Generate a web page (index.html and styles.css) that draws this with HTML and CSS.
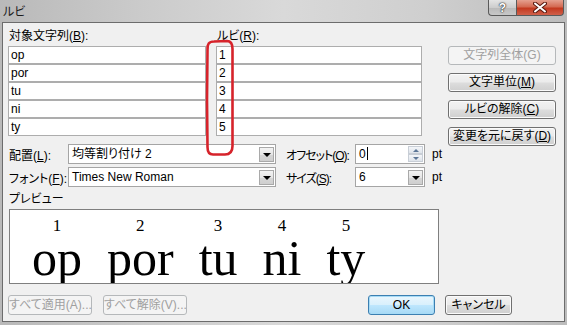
FILE: index.html
```html
<!DOCTYPE html>
<html lang="ja">
  <head>
    <meta charset="UTF-8" />
    <title>ルビ</title>
    <link rel="stylesheet" href="styles.css">
  </head>
  <body>
    <div class="window">
      <div class="titlebar">
        <span class="title">ルビ</span>
        <div class="caption">
          <span class="cap help">?</span>
          <span class="cap close">
            <svg width="14" height="11" viewBox="0 0 14 11">
              <path d="M2 1.5 L12 9.5 M12 1.5 L2 9.5" stroke="#5a1a10" stroke-width="4" stroke-linecap="round" />
              <path d="M2 1.5 L12 9.5 M12 1.5 L2 9.5" stroke="#ffffff" stroke-width="2" stroke-linecap="round" />
            </svg>
          </span>
        </div>
      </div>

      <div class="client">
        <div class="main">
          <div class="left">
            <div class="pairs">
              <div class="col col-base">
                <div class="col-label">対象文字列(<u>B</u>):</div>
                <div class="cell">op</div>
                <div class="cell">por</div>
                <div class="cell">tu</div>
                <div class="cell">ni</div>
                <div class="cell">ty</div>
              </div>
              <div class="col col-ruby">
                <div class="col-label">ルビ(<u>R</u>):</div>
                <div class="cell">1</div>
                <div class="cell">2</div>
                <div class="cell">3</div>
                <div class="cell">4</div>
                <div class="cell">5</div>
              </div>
            </div>

            <div class="opt-row">
              <span class="opt-label">配置(<u>L</u>):</span>
              <div class="combo">
                <span class="combo-text">均等割り付け 2</span>
                <span class="drop"><i class="arrow"></i></span>
              </div>
              <span class="opt-label2">オフセット(<u>O</u>):</span>
              <div class="field">
                <span class="combo-text">0<i class="caret"></i></span>
                <span class="spin">
                  <span class="spin-half"><i class="up"></i></span>
                  <span class="spin-half"><i class="down"></i></span>
                </span>
              </div>
              <span class="unit">pt</span>
            </div>

            <div class="opt-row second">
              <span class="opt-label">フォント(<u>F</u>):</span>
              <div class="combo">
                <span class="combo-text">Times New Roman</span>
                <span class="drop"><i class="arrow"></i></span>
              </div>
              <span class="opt-label2">サイズ(<u>S</u>):</span>
              <div class="field">
                <span class="combo-text">6</span>
                <span class="drop"><i class="arrow"></i></span>
              </div>
              <span class="unit">pt</span>
            </div>

            <div class="preview-label">プレビュー</div>
            <div class="preview">
              <div class="rb"><span class="rt">1</span><span class="rbase">op</span></div>
              <div class="rb"><span class="rt">2</span><span class="rbase">por</span></div>
              <div class="rb"><span class="rt">3</span><span class="rbase">tu</span></div>
              <div class="rb"><span class="rt">4</span><span class="rbase">ni</span></div>
              <div class="rb"><span class="rt">5</span><span class="rbase">ty</span></div>
            </div>
          </div>

          <div class="side">
            <button type="button" class="btn" disabled>文字列全体(G)</button>
            <button type="button" class="btn">文字単位(<u>M</u>)</button>
            <button type="button" class="btn">ルビの解除(<u>C</u>)</button>
            <button type="button" class="btn">変更を元に戻す(<u>D</u>)</button>
          </div>
        </div>

        <div class="footer">
          <button type="button" class="btn wide" disabled>すべて適用(A)...</button>
          <button type="button" class="btn wide" disabled>すべて解除(V)...</button>
          <button type="button" class="btn small default">OK</button>
          <button type="button" class="btn small">キャンセル</button>
        </div>
      </div>

      <!-- 手書きの赤枠 -->
      <svg class="annot" width="567" height="325" viewBox="0 0 567 325">
        <path d="M207.5 50 C207 44 209 41.5 214 41.5 L227 41 C231 41 232.5 44 232.5 49 L232.5 146 C232.5 152 230 154.5 225 154.5 L213 154.5 C209 154.5 207.5 152 207.5 147 L207 100 Z"
          fill="none" stroke="#d6232b" stroke-width="2.6" stroke-linejoin="round" />
      </svg>
    </div>
  </body>
</html>
```

FILE: styles.css
```css
body {
  margin: 0;
  font-family: "Liberation Sans", "Noto Sans CJK JP", sans-serif;
  font-size: 12px;
  font-feature-settings: "palt";
  color: #000;
  background: #c4c4c4;
}
.window {
  position: relative;
  width: 567px;
  height: 325px;
  overflow: hidden;
  white-space: nowrap;
  background: linear-gradient(90deg, #b9b9b9, #cbcbcb 25%, #d9d9d9 50%, #cfcfcf 75%, #bcbcbc);
}
.titlebar {
  display: flex;
  height: 22px;
}
.title {
  padding-left: 3px;
  line-height: 21px;
  font-family: "Noto Sans CJK JP", sans-serif;
  color: #1b1b1b;
}
.caption {
  display: flex;
  margin-left: auto;
  margin-right: 3px;
  height: 16px;
}
.cap {
  display: flex;
  justify-content: center;
  align-items: center;
  height: 15px;
  border: 1px solid #5a5a5a;
  border-top: none;
}
.help {
  width: 27px;
  border-right: none;
  border-bottom-left-radius: 4px;
  background: linear-gradient(#e4e4e4, #cdcdcd 50%, #b9b9b9 51%, #c8c8c8);
  color: #fff;
  font-weight: bold;
  font-size: 12px;
  text-shadow: 0 0 1px #333, 0 0 1px #333, 0 0 2px #444;
}
.close {
  width: 46px;
  border-bottom-right-radius: 4px;
  background: linear-gradient(#e5a08f, #d46a52 45%, #c3391f 55%, #d0604a);
}

.client {
  width: 563px;
  height: 300px;
  margin-left: 2px;
  padding: 6px 0 0 5px;
  box-sizing: border-box;
  border: 1px solid #6c6c6c;
  background: #f0f0f0;
}
.main {
  display: flex;
}
.left {
  width: 430px;
  flex-shrink: 0;
}
.pairs {
  display: flex;
  gap: 10px;
}
.col-base {
  width: 198px;
}
.col-ruby {
  width: 206px;
}
.col-label {
  height: 17px;
  line-height: 15px;
  padding-left: 1px;
}
.cell {
  height: 18px;
  box-sizing: border-box;
  border: 1px solid #adadad;
  background: #fff;
  line-height: 16px;
  padding-left: 2px;
}

.opt-row {
  display: flex;
  align-items: center;
  height: 20px;
  margin-top: 8px;
}
.opt-row.second {
  margin-top: 3px;
}
.opt-label {
  flex-shrink: 0;
  width: 59px;
  padding-left: 1px;
}
.opt-label2 {
  flex-shrink: 0;
  width: 69px;
  margin-left: 10px;
  letter-spacing: -1px;
}
.combo,
.field {
  display: flex;
  flex-shrink: 0;
  align-items: center;
  height: 20px;
  box-sizing: border-box;
  border: 1px solid #a5a5a5;
  background: #fff;
  padding: 0 1px 0 3px;
}
.combo {
  width: 208px;
}
.field {
  width: 70px;
}
.combo-text {
  flex: 1;
  line-height: 16px;
}
.caret {
  display: inline-block;
  width: 1px;
  height: 13px;
  margin-left: 1px;
  background: #000;
  vertical-align: -2px;
}
.drop {
  display: flex;
  justify-content: center;
  align-items: center;
  width: 15px;
  height: 15px;
  border: 1px solid #a9a9a9;
  box-sizing: border-box;
  background: linear-gradient(#f3f3f3, #e6e6e6 50%, #d6d6d6 51%, #cfcfcf);
}
.arrow {
  width: 0;
  height: 0;
  border-left: 4px solid transparent;
  border-right: 4px solid transparent;
  border-top: 4px solid #000;
  margin-top: 1px;
}
.spin {
  display: flex;
  flex-direction: column;
  width: 15px;
  height: 16px;
}
.spin-half {
  display: flex;
  justify-content: center;
  align-items: center;
  height: 8px;
  box-sizing: border-box;
  border: 1px solid #c8ced6;
  background: linear-gradient(#f4f6f9, #dfe4ea);
}
.up,
.down {
  width: 0;
  height: 0;
  border-left: 3px solid transparent;
  border-right: 3px solid transparent;
}
.up {
  border-bottom: 3px solid #5d7797;
}
.down {
  border-top: 3px solid #5d7797;
}
.unit {
  margin-left: 7px;
}

.preview-label {
  margin-top: 4px;
  margin-bottom: 2px;
  line-height: 16px;
  padding-left: 1px;
}
.preview {
  display: flex;
  gap: 25px;
  width: 430px;
  height: 75px;
  margin-left: 1px;
  box-sizing: border-box;
  border: 1px solid #7f7f7f;
  background: #fff;
  padding: 7px 0 0 22px;
  overflow: hidden;
  font-family: "Liberation Serif", serif;
}
.rb {
  display: flex;
  flex-direction: column;
  align-items: center;
}
.rt {
  font-size: 17px;
  line-height: 17px;
}
.rbase {
  font-size: 50px;
  line-height: 48px;
}

.side {
  display: flex;
  flex-direction: column;
  gap: 8px;
  margin-left: 10px;
  padding-top: 17px;
}
.btn {
  height: 19px;
  padding: 0;
  box-sizing: border-box;
  border: 1px solid #707070;
  border-radius: 3px;
  background: linear-gradient(#f2f2f2, #ebebeb 48%, #dddddd 52%, #cfcfcf);
  box-shadow: inset 0 0 0 1px #fbfbfb;
  font-family: "Liberation Sans", "Noto Sans CJK JP", sans-serif;
  font-size: 12px;
  font-feature-settings: "palt";
  white-space: nowrap;
  color: #000;
  line-height: 15px;
}
.side .btn {
  width: 108px;
}
.btn:disabled {
  border-color: #b5b8ba;
  background: #f4f4f4;
  box-shadow: none;
  color: #a0a0a0;
}

.footer {
  display: flex;
  gap: 11px;
  margin-top: 11px;
  padding-right: 52px;
}
.btn.wide {
  width: 84px;
  height: 20px;
}
.btn.small {
  width: 67px;
  height: 20px;
}
.btn.default {
  margin-left: auto;
  margin-right: -1px;
  border-color: #3c7fb1;
  box-shadow: inset 0 0 0 1px #a6dbf6;
  background: linear-gradient(#eaf6fd, #d9f0fc 48%, #bee6fd 52%, #a7d9f5);
}

.annot {
  position: absolute;
  left: 0;
  top: 0;
  pointer-events: none;
}
```
